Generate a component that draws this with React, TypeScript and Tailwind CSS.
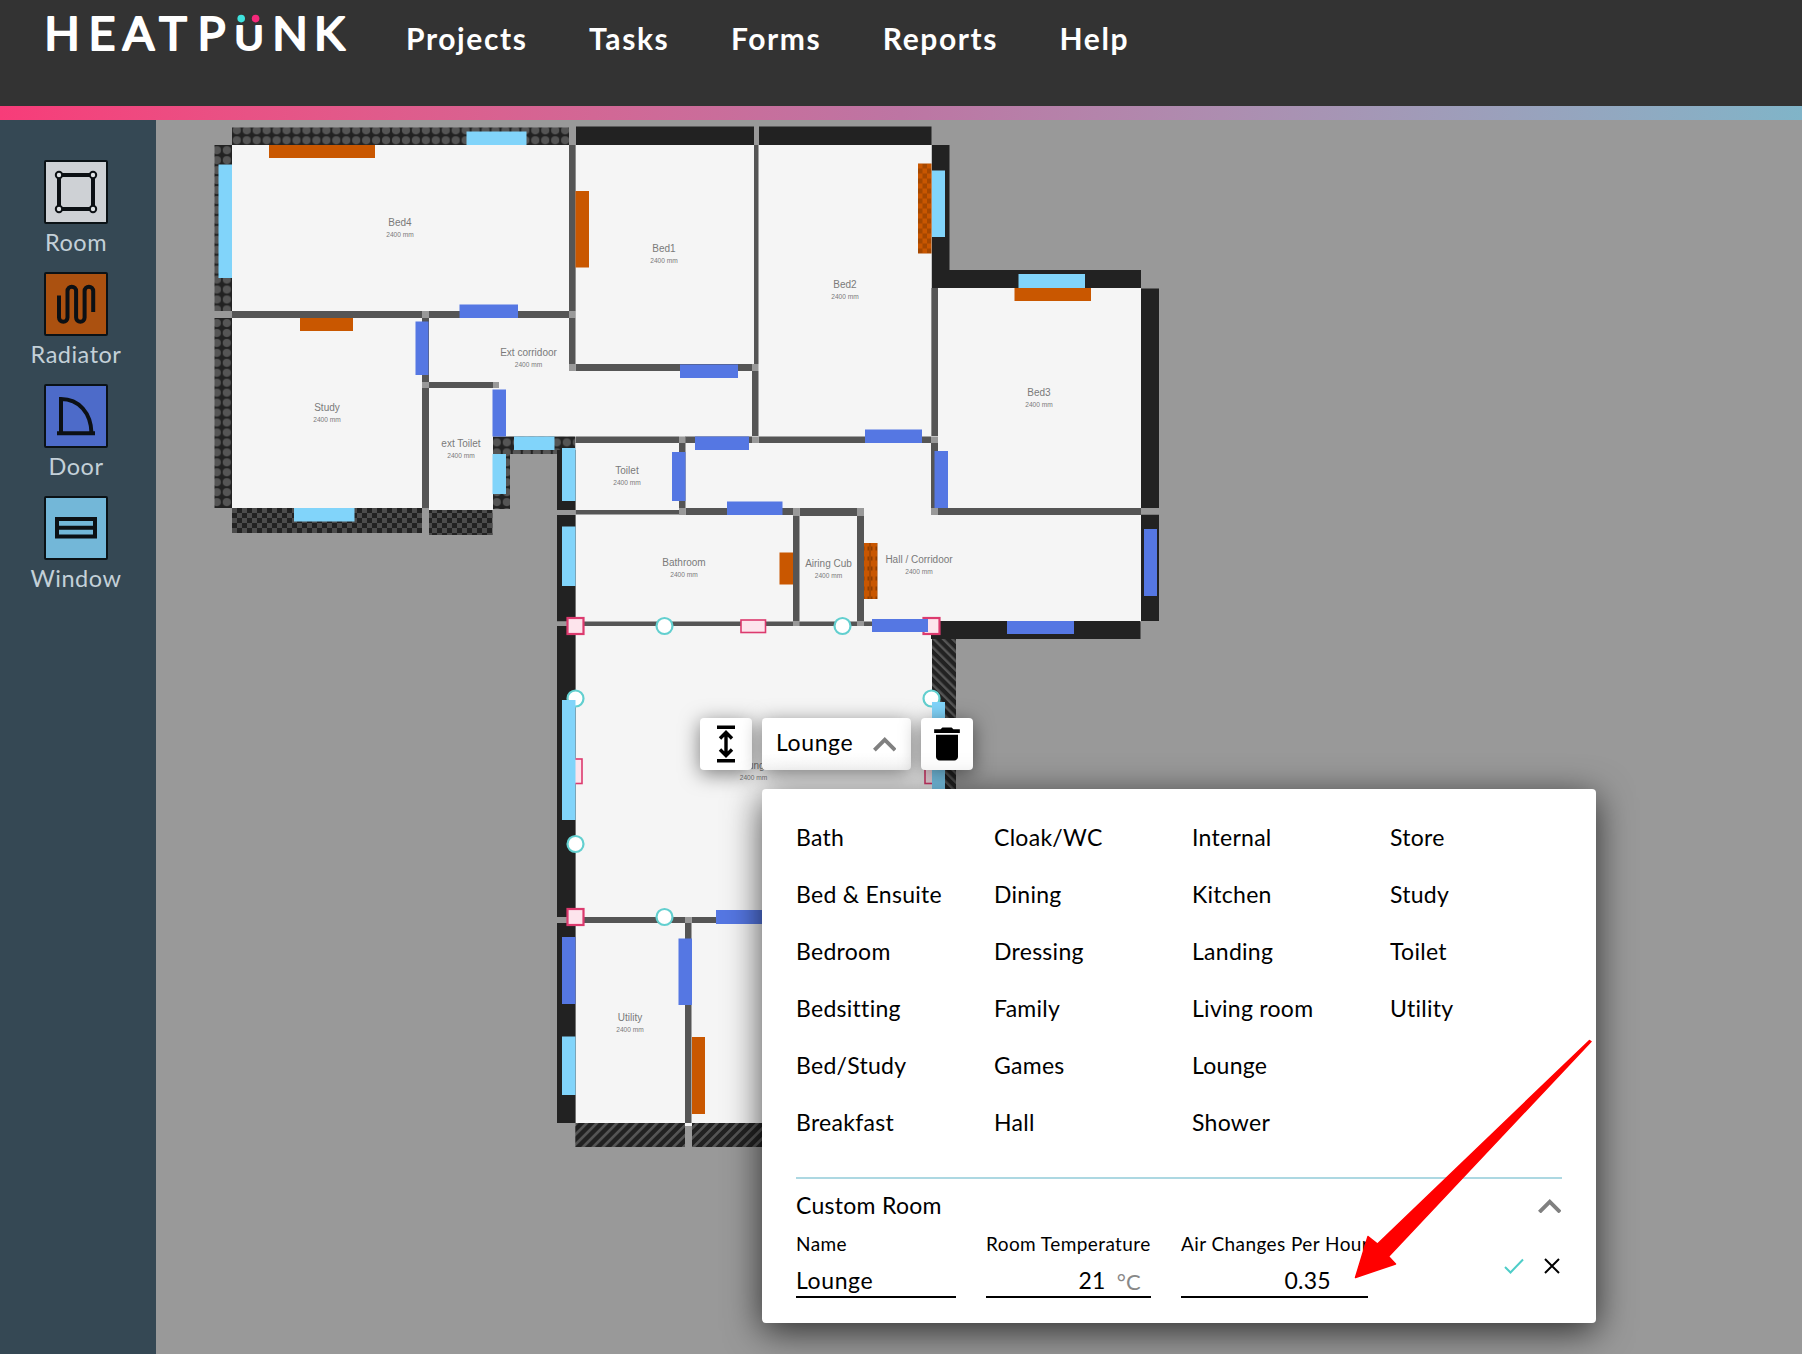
import type { ReactNode } from "react";

type Box = [x: number, y: number, w: number, h: number];

const NAV = ["Projects", "Tasks", "Forms", "Reports", "Help"];

const ROOM_TYPES = [
  "Bath", "Bed & Ensuite", "Bedroom", "Bedsitting", "Bed/Study", "Breakfast",
  "Cloak/WC", "Dining", "Dressing", "Family", "Games", "Hall",
  "Internal", "Kitchen", "Landing", "Living room", "Lounge", "Shower",
  "Store", "Study", "Toilet", "Utility",
];

/* Floor plan geometry, in page pixels. */
const FLOORS: Box[] = [
  [232, 145, 337, 166],
  [232, 318, 190, 190],
  [429, 318, 330, 119],
  [429, 388, 64, 122],
  [575.5, 145, 356, 297],
  [575.5, 436, 362.5, 690],
  [938, 288, 203, 334],
];
const FLOOR_CUT: Box[] = [
  [938, 639, 210, 500],
];

const SOLID: Box[] = [
  [576, 126.5, 178, 18.5],
  [759, 126.5, 172.5, 18.5],
  [932, 145, 17.5, 143],
  [932, 270, 209, 18],
  [1141, 288.5, 18, 219.5],
  [1141, 514.5, 18, 106.5],
  [931, 621, 209.5, 18],
  [557, 450, 18.5, 60],
  [557, 515, 18.5, 106.5],
  [557, 626, 18.5, 291],
  [557, 923, 18.5, 200],
];

const INNER: Box[] = [
  [232, 311, 190, 7],
  [429, 311, 140, 7],
  [569, 145, 6.5, 166],
  [569, 318, 6.5, 46],
  [422, 318, 7, 64],
  [422, 388, 7, 120],
  [429, 382, 64, 6],
  [754, 145, 4.5, 219],
  [575.5, 364, 176.5, 7],
  [752, 371, 6.5, 65],
  [575.5, 436.5, 103.5, 6.5],
  [685, 436.5, 67, 6.5],
  [758.5, 436.5, 172.5, 6.5],
  [679, 443, 6.5, 65],
  [575.5, 510, 103.5, 4.5],
  [685.5, 508, 107.5, 7],
  [799.5, 508, 57.5, 8],
  [793, 516, 6.5, 105],
  [857, 516, 7, 105],
  [931.5, 288, 6.5, 148],
  [931, 443, 7, 65],
  [938, 508, 203, 7],
  [575.5, 621.5, 356, 4.5],
  [575.5, 917, 109.5, 6],
  [691.5, 917, 240, 6],
  [685, 923, 6.5, 200],
];

const JOINTS: Box[] = [
  [422, 311, 7, 7],
  [569, 311, 6.5, 7],
  [569, 364, 6.5, 7],
  [422, 382, 7, 6],
  [493, 382, 6, 6],
  [752, 364, 6.5, 7],
  [679, 436.5, 6.5, 6.5],
  [752, 436.5, 6.5, 6.5],
  [679, 508, 6.5, 7],
  [793, 508, 6.5, 8],
  [857, 508, 7, 8],
  [793, 621, 6.5, 5],
  [857, 621, 7, 5],
  [931, 436.5, 7, 6.5],
  [931, 508, 7, 7],
  [1141, 508, 18.5, 6.5],
  [557, 510, 18.5, 5],
  [557, 621.5, 18.5, 4.5],
  [557, 917, 18.5, 6],
  [685, 917, 6.5, 6],
  [569, 126, 6.5, 19],
  [754, 126, 4.5, 19],
];

const RADIATORS: Box[] = [
  [269, 145, 106, 13],
  [300, 318, 53, 13],
  [575.5, 191, 13.5, 76.5],
  [1014.5, 288, 76.5, 13],
  [779.5, 552.5, 13.5, 32],
  [692, 1037, 13, 77],
];

const WINDOWS: Box[] = [
  [218.5, 164.5, 13.5, 113.5],
  [466.5, 131.5, 60, 13.5],
  [514, 436.5, 40.5, 13.5],
  [492.5, 454, 13.5, 40],
  [294, 508, 60.5, 13.5],
  [562, 448, 13.5, 53],
  [562, 526.5, 13.5, 59.5],
  [932, 170.5, 13, 66.5],
  [1018.5, 274, 66.5, 14],
  [562, 700, 13.5, 120],
  [932, 702, 13, 120],
  [562, 1036.5, 13.5, 58.5],
];

const DOORS: Box[] = [
  [459.5, 304.5, 58.5, 13.5],
  [415.5, 321.5, 13, 53.5],
  [492.5, 389.5, 13.5, 47],
  [680, 364.5, 58, 13.5],
  [695, 436.5, 54, 13.5],
  [672, 452, 13.5, 49],
  [727, 501.5, 55.5, 13.5],
  [865, 429.5, 57, 13.5],
  [934.5, 451, 13.5, 57],
  [1144, 529, 13, 67],
  [1007, 621, 67, 13],
  [872, 619, 56, 13],
  [716, 910, 60, 14],
  [562, 937, 13.5, 67],
  [678.5, 938.5, 13.5, 66.5],
];

const LABELS: [string, number, number][] = [
  ["Bed4", 400, 226],
  ["Bed1", 664, 252],
  ["Bed2", 845, 288],
  ["Study", 327, 411],
  ["Ext corridoor", 528.5, 356],
  ["ext Toilet", 461, 447],
  ["Toilet", 627, 474],
  ["Bed3", 1039, 396],
  ["Bathroom", 684, 566],
  ["Airing Cub", 828.5, 567],
  ["Hall / Corridoor", 919, 563],
  ["Utility", 630, 1021],
  ["Lounge", 753.5, 769],
];

const CORNERS: [number, number][] = [[575.5, 626], [931.5, 626], [575.5, 917]];
const NODES: [number, number][] = [
  [664.5, 626], [842.5, 626], [575.5, 698.5], [931.5, 698.5], [575.5, 844], [664.5, 917],
];
const GRIPS: Box[] = [[741, 620, 24.5, 12.5], [569, 759, 13, 24.5], [925, 759, 13, 24.5]];

function Rects({ boxes, className }: { boxes: Box[]; className: string }) {
  return (
    <g className={className}>
      {boxes.map(([x, y, w, h], i) => (
        <rect key={i} x={x} y={y} width={w} height={h} />
      ))}
    </g>
  );
}

function FloorPlan() {
  return (
    <svg className="block h-full w-full" viewBox="156 120 1646 1234">
      <defs>
        <pattern id="dots" x="231.8" y="125.3" width="9.95" height="9.95" patternUnits="userSpaceOnUse">
          <rect width="10" height="10" fill="#222" />
          <circle cx="5" cy="5" r="4.1" fill="#555" />
        </pattern>
        <pattern id="dotsLow" x="231.8" y="318" width="10" height="9.95" patternUnits="userSpaceOnUse">
          <rect width="10" height="10" fill="#222" />
          <circle cx="5" cy="5" r="4.1" fill="#555" />
        </pattern>
        <pattern id="check" x="232" y="508" width="10" height="10" patternUnits="userSpaceOnUse">
          <rect width="10" height="10" fill="#222" />
          <path d="M0 0h5v5H0zM5 5h5v5H5z" fill="#4c4c4c" />
        </pattern>
        <pattern id="hatch" x="575" y="1123" width="7.1" height="7.1" patternUnits="userSpaceOnUse" patternTransform="rotate(45 575 1123)">
          <rect width="7.1" height="7.1" fill="#222" />
          <rect width="2.6" height="7.1" fill="#555" />
        </pattern>
        <pattern id="hatchBack" x="932" y="639" width="6.6" height="6.6" patternUnits="userSpaceOnUse" patternTransform="rotate(-45 932 639)">
          <rect width="6.6" height="6.6" fill="#222" />
          <rect width="2.4" height="6.6" fill="#555" />
        </pattern>
        <pattern id="radCheck" x="918" y="163.5" width="9" height="10" patternUnits="userSpaceOnUse">
          <rect width="9" height="10" fill="#c85600" />
          <path d="M4.5 0H9v5H4.5zM0 5h4.5v5H0z" fill="#a54700" />
        </pattern>
        <pattern id="radDots" x="862" y="543" width="8" height="10" patternUnits="userSpaceOnUse">
          <rect width="8" height="10" fill="#c85600" />
          <path d="M0 3.5h2.5v4H0zM5.5 3.5H8v4H5.5z" fill="#8f3d00" />
          <path d="M0 0h1v10H0zM7 0h1v10H7z" fill="#a84800" />
        </pattern>
      </defs>

      <Rects boxes={FLOORS} className="fill-[#f5f5f5]" />
      <Rects boxes={FLOOR_CUT} className="fill-[#999]" />

      <g fill="url(#dots)">
        <rect x="232" y="127.5" width="337" height="17.5" />
        <rect x="214.5" y="145" width="17.5" height="166" />
      </g>
      <g fill="url(#dotsLow)">
        <rect x="214.5" y="318" width="17.5" height="190" />
        <rect x="493" y="436.5" width="82" height="17.5" />
        <rect x="493" y="454" width="17" height="55" />
      </g>
      <g fill="url(#check)">
        <rect x="232" y="508" width="190" height="25" />
        <rect x="429" y="510" width="63.5" height="25" />
      </g>
      <g fill="url(#hatch)">
        <rect x="575.3" y="1123" width="109.7" height="24" />
        <rect x="692" y="1123" width="239" height="24" />
      </g>
      <rect x="932" y="639" width="24" height="278" fill="url(#hatchBack)" />

      <Rects boxes={SOLID} className="fill-[#222]" />
      <Rects boxes={INNER} className="fill-[#555]" />
      <Rects boxes={JOINTS} className="fill-[#999]" />
      <Rects boxes={RADIATORS} className="fill-[#c95700]" />
      <rect x="918" y="163.5" width="13.5" height="90" fill="url(#radCheck)" />
      <rect x="864" y="543" width="13.5" height="56" fill="url(#radDots)" />

      <g className="fill-[#fde4ec] stroke-[#dc3a6e] stroke-[2.2]">
        {CORNERS.map(([x, y]) => (
          <rect key={`${x}-${y}`} x={x - 8} y={y - 8} width="16" height="16" />
        ))}
      </g>
      <g className="fill-[#fde4ec] stroke-[#dc3a6e] stroke-[1.6]">
        {GRIPS.map(([x, y, w, h]) => (
          <rect key={`${x}-${y}`} x={x} y={y} width={w} height={h} />
        ))}
      </g>
      <g className="fill-white stroke-[#62cfcf] stroke-[2.2]">
        {NODES.map(([x, y]) => (
          <circle key={`${x}-${y}`} cx={x} cy={y} r="8" />
        ))}
      </g>

      <Rects boxes={WINDOWS} className="fill-[#81d4fa]" />
      <Rects boxes={DOORS} className="fill-[#5577e3]" />

      <g className="fill-[#7a7a7a] font-['Liberation_Sans',sans-serif] tracking-normal" textAnchor="middle">
        {LABELS.map(([name, x, y]) => (
          <g key={name}>
            <text x={x} y={y + 0.4} className="text-[10px]">{name}</text>
            <text x={x} y={y + 11} className="text-[6.6px]">2400 mm</text>
          </g>
        ))}
      </g>
    </svg>
  );
}

function Logo() {
  return (
    <svg className="h-[106px] w-[360px] shrink-0" viewBox="0 0 360 106" role="img" aria-label="Heatpunk">
      <g
        className="fill-white stroke-white stroke-[2.1] font-['Lato',sans-serif] text-[46.6px] tracking-normal"
        strokeLinejoin="round"
        textAnchor="middle"
      >
        <text y="49.8" x="62">H</text>
        <text y="49.8" x="102">E</text>
        <text y="49.8" x="138.5">A</text>
        <text y="49.8" x="173">T</text>
        <text y="49.8" x="211.5">P</text>
        <text transform="translate(249 49.8) scale(1.22 1)" className="text-[32.5px]">U</text>
        <text y="49.8" x="290">N</text>
        <text y="49.8" x="329.5">K</text>
      </g>
      <circle cx="241.2" cy="18.6" r="3.8" fill="#3fe3de" />
      <circle cx="255.6" cy="18.6" r="3.8" fill="#f5287a" />
    </svg>
  );
}

function Tool({ label, tint, children }: { label: string; tint: string; children: ReactNode }) {
  return (
    <div className="flex h-28 flex-col items-center">
      <div className={`flex size-16 items-center justify-center rounded-[2px] border-2 border-[#0b1216] ${tint}`}>
        <svg className="size-[60px] fill-none stroke-[#0c1014]" viewBox="0 0 60 60">
          {children}
        </svg>
      </div>
      <span className="text-[23.5px] leading-9 tracking-[0.5px] text-[#c3d0d8]">{label}</span>
    </div>
  );
}

function Sidebar() {
  return (
    <aside className="flex w-[156px] shrink-0 flex-col items-center bg-[#354854] pr-1 pt-10">
      <Tool label="Room" tint="bg-[#ced1d5]">
        <g strokeWidth="4">
          <path d="M13 13h34v34H13z" />
          <g strokeWidth="2" fill="#dfe2e5">
            <circle cx="13" cy="13" r="3.2" />
            <circle cx="47" cy="13" r="3.2" />
            <circle cx="13" cy="47" r="3.2" />
            <circle cx="47" cy="47" r="3.2" />
          </g>
        </g>
      </Tool>
      <Tool label="Radiator" tint="bg-[#ab5110]">
        <path
          d="M13 21.5V43.5a4.2 4.2 0 0 0 8.5 0V17a4.3 4.3 0 0 1 8.6 0V43.5a4.2 4.2 0 0 0 8.5 0V17a4.3 4.3 0 0 1 8.6 0V38"
          strokeWidth="4"
        />
      </Tool>
      <Tool label="Door" tint="bg-[#4d6bc9]">
        <path d="M15 47V13C33 13 45 27 45.5 47M11 47.2h38" strokeWidth="4" />
      </Tool>
      <Tool label="Window" tint="bg-[#73b7d8]">
        <path d="M11 21h38v17.5H11zM11 29.8h38" strokeWidth="4" />
      </Tool>
    </aside>
  );
}

function ChevronUp({ className }: { className: string }) {
  return (
    <svg className={className} viewBox="6 8 12 7.41">
      <path d="M12 8l-6 6 1.41 1.41L12 10.83l4.59 4.58L18 14z" fill="currentColor" />
    </svg>
  );
}

function Toolbar() {
  const card = "flex h-[52px] items-center rounded bg-white shadow-[0_4px_20px_rgba(0,0,0,0.5)]";
  return (
    <div className="absolute left-[544px] top-[598px] flex gap-2.5">
      <div className={`${card} w-[52px] justify-center`}>
        <svg className="h-[38px] w-5" viewBox="0 0 20 38">
          <path d="M1 0.5h18v3.5H1zM1 34h18v3.5H1z" />
          <path d="M10 8.5V29.5M4 13.5L10 7.5L16 13.5M4 24.5L10 30.5L16 24.5" fill="none" stroke="#000" strokeWidth="3.4" />
        </svg>
      </div>
      <div className={`${card} w-[149px] justify-between bg-linear-to-b from-white from-70% to-[#f7f7f7] pl-[14px] pr-[15px]`}>
        <span className="pb-[3px] leading-[49px] tracking-[0.6px]">Lounge</span>
        <ChevronUp className="mt-px h-[14.5px] w-[23.5px] text-[#808080]" />
      </div>
      <div className={`${card} w-[52px] justify-center`}>
        <svg className="size-11" viewBox="0 0 24 24">
          <path d="M6 19c0 1.1.9 2 2 2h8c1.1 0 2-.9 2-2V7H6v12zM19 4h-3.5l-1-1h-5l-1 1H5v2h14V4z" />
        </svg>
      </div>
    </div>
  );
}

function Field({ label, className, children }: { label: string; className: string; children: ReactNode }) {
  return (
    <label className={`flex flex-col ${className}`}>
      <span className="h-6 whitespace-nowrap text-[19px] leading-6 tracking-[0.42px]">{label}</span>
      <span className="mt-1 flex h-[38px] items-center border-b-2 border-black">{children}</span>
    </label>
  );
}

function RoomPopup() {
  return (
    <div className="absolute left-[606px] top-[669px] h-[534px] w-[834px] rounded-[4px] bg-white px-[34px] pt-5 shadow-[0_8px_36px_rgba(0,0,0,0.7)]">
      <div className="grid auto-cols-[198px] grid-flow-col grid-rows-6">
        {ROOM_TYPES.map((t) => (
          <span key={t} className="h-[57px] whitespace-nowrap leading-[57px]">{t}</span>
        ))}
      </div>
      <div className="mt-[26px] h-0.5 bg-[#add8e2]" />
      <div className="mt-1.5 flex h-10 items-center justify-between">
        <span>Custom Room</span>
        <ChevronUp className="mr-px mt-0.5 h-[14.5px] w-[23.5px] text-[#808080]" />
      </div>
      <div className="mt-[7px] flex">
        <Field label="Name" className="w-40">
          <span className="mt-1 tracking-[0.6px]">Lounge</span>
        </Field>
        <Field label="Room Temperature" className="ml-[30px] w-[165px]">
          <span className="ml-auto mt-1">21</span>
          <span className="ml-[11px] mr-2.5 mt-1.5 text-[22px] text-[#888]">°C</span>
        </Field>
        <Field label="Air Changes Per Hour" className="ml-[30px] w-[187px]">
          <span className="ml-auto mr-[37px] mt-1">0.35</span>
        </Field>
        <div className="ml-auto flex h-[68px] items-center gap-5">
          <svg className="h-4 w-5 fill-none stroke-[#4ecdc8] stroke-2" viewBox="0 0 20 16">
            <path d="M1 9l5.5 5.5L19 1.5" />
          </svg>
          <svg className="mr-0.5 size-4 fill-none stroke-black stroke-2" viewBox="0 0 16 16">
            <path d="M1 1l14 14M15 1L1 15" />
          </svg>
        </div>
      </div>
    </div>
  );
}

function Arrow() {
  return (
    <svg className="absolute left-[1194px] top-[916px] h-[246px] w-[246px]" viewBox="1350 1036 246 246">
      <path
        d="M1355.5 1277.5L1368 1236.5L1377.5 1244L1589.5 1040.5L1591 1041.5L1388.5 1256.5L1395.5 1264z"
        className="fill-[#ff0000] stroke-[#ff0000] stroke-[1.5]"
        strokeLinejoin="round"
      />
    </svg>
  );
}

export default function App() {
  return (
    <div className="flex h-[1354px] w-[1802px] flex-col overflow-hidden bg-[#999] font-['Lato',sans-serif] text-[23px] tracking-[0.28px] text-black">
      <header className="flex h-[106px] shrink-0 bg-[#333]">
        <Logo />
        <nav className="ml-[46px] flex gap-[61.5px] text-[30px] font-bold leading-[76px] tracking-[1.6px] text-white">
          {NAV.map((n) => (
            <a key={n}>{n}</a>
          ))}
        </nav>
      </header>
      <div className="h-[14px] shrink-0 bg-linear-to-r from-[#f73c79] via-[#bd75a3] to-[#80b4c8]" />
      <div className="flex min-h-0 grow">
        <Sidebar />
        <main className="relative min-w-0 grow">
          <FloorPlan />
          <Toolbar />
          <RoomPopup />
          <Arrow />
        </main>
      </div>
    </div>
  );
}
